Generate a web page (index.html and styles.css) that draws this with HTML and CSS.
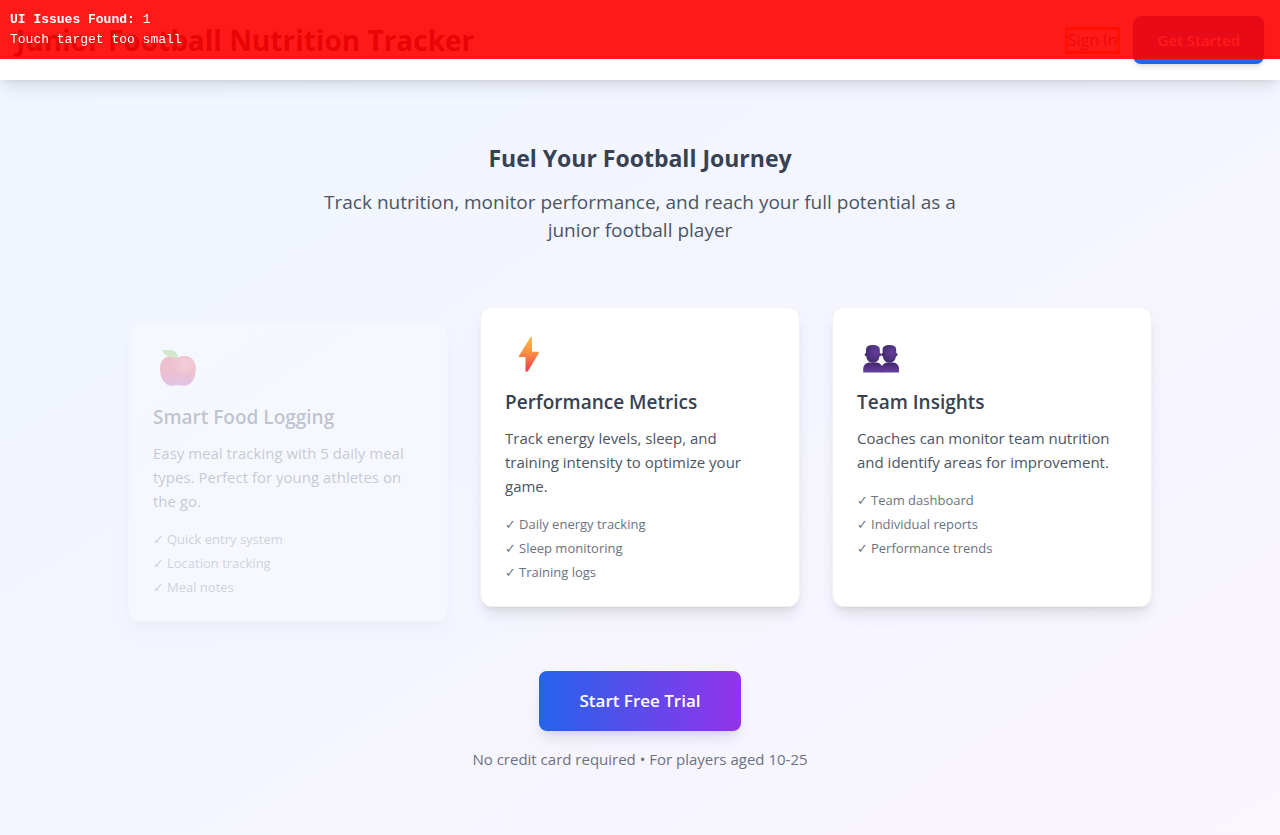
FILE: index.html
```html
<!DOCTYPE html>
<html lang="en">
<head>
<meta charset="utf-8">
<meta name="viewport" content="width=device-width, initial-scale=1">
<title>Junior Football Nutrition Tracker</title>
<link rel="stylesheet" href="styles.css">
</head>
<body>
<div class="issues" role="status">
  <strong>UI Issues Found: <span class="issue-count">1</span></strong>
  <span>Touch target too small</span>
</div>
<header class="site-header">
  <h1 class="brand">Junior Football Nutrition Tracker</h1>
  <nav class="actions">
    <a class="sign-in" href="#signin">Sign In</a>
    <button class="get-started" type="button">Get Started</button>
  </nav>
</header>
<main class="main">
  <section class="hero">
    <h2>Fuel Your Football Journey</h2>
    <p>Track nutrition, monitor performance, and reach your full potential as a junior football player</p>
  </section>
  <section class="cards">
    <article class="card entering">
      <svg class="icon" viewBox="0 -1 48 40" aria-hidden="true">
        <defs>
          <linearGradient id="apple" x1="0" y1="0" x2="0" y2="1"><stop offset="0" stop-color="#e8374f"/><stop offset=".55" stop-color="#dc2f55"/><stop offset="1" stop-color="#b044a8"/></linearGradient>
          <radialGradient id="shine" cx=".7" cy=".3" r=".4"><stop offset="0" stop-color="#ff7a80" stop-opacity=".8"/><stop offset="1" stop-color="#ff7a80" stop-opacity="0"/></radialGradient>
        </defs>
        <path fill="url(#apple)" d="M25 9.500C27 8.300 29 8 31.500 8C38.500 8 42.800 13 42.800 20.500C42.800 31 38 37.800 31 37.800C29 37.800 27.500 37.200 25 37.200C22.500 37.200 21 37.800 19 37.800C12 37.800 7 31 7 20.500C7 13 11.500 8 18.500 8C21 8 23 8.300 25 9.500Z"/>
        <path fill="url(#shine)" d="M25 9.500C27 8.300 29 8 31.500 8C38.500 8 42.800 13 42.800 20.500C42.800 31 38 37.800 31 37.800C29 37.800 27.500 37.200 25 37.200C22.500 37.200 21 37.800 19 37.800C12 37.800 7 31 7 20.500C7 13 11.500 8 18.500 8C21 8 23 8.300 25 9.500Z"/>
        <path fill="#7fc44a" d="M9.700 2H17C22 2 25 5.500 25 10C20 10 17.500 9.500 14.500 8C11.500 6.500 9.700 4.500 9.700 2Z"/>
      </svg>
      <h3>Smart Food Logging</h3>
      <p>Easy meal tracking with 5 daily meal types. Perfect for young athletes on the go.</p>
      <ul>
        <li><span class="tick">✓</span>Quick entry system</li>
        <li><span class="tick">✓</span>Location tracking</li>
        <li><span class="tick">✓</span>Meal notes</li>
      </ul>
    </article>
    <article class="card">
      <svg class="icon" viewBox="0 -1 48 40" aria-hidden="true">
        <defs><linearGradient id="bolt" x1="0" y1="0" x2="0" y2="1"><stop offset="0" stop-color="#ffb84d"/><stop offset=".45" stop-color="#fb9042"/><stop offset="1" stop-color="#f5374f"/></linearGradient></defs>
        <path fill="url(#bolt)" d="M25.400 4.200Q26 3.300 27 4V17.800Q27 18.800 28 18.800H33.500Q34.300 19 33.900 20L23 38Q21.900 39.300 20.500 38.500V25.200Q20.500 24 19.500 24H14.500Q13.600 23.700 14 22.800Z"/>
      </svg>
      <h3>Performance Metrics</h3>
      <p>Track energy levels, sleep, and training intensity to optimize your game.</p>
      <ul>
        <li><span class="tick">✓</span>Daily energy tracking</li>
        <li><span class="tick">✓</span>Sleep monitoring</li>
        <li><span class="tick">✓</span>Training logs</li>
      </ul>
    </article>
    <article class="card">
      <svg class="icon" viewBox="0 -1 48 40" aria-hidden="true">
        <defs>
          <radialGradient id="head" cx=".65" cy=".4" r=".6"><stop offset="0" stop-color="#643f9d"/><stop offset="1" stop-color="#432b6e"/></radialGradient>
          <linearGradient id="torso" x1="0" y1="0" x2="0" y2="1"><stop offset="0" stop-color="#43266e"/><stop offset="1" stop-color="#6941a0"/></linearGradient>
        </defs>
        <path fill="url(#torso)" d="M24.500 39.500V36Q24.500 30.500 30 29.500H36.500Q42 30.500 42 36V39.500Z"/>
        <path fill="url(#torso)" d="M6.200 39.500V36Q6.200 30.500 12 29.500H20Q25.500 30.500 25.500 36V39.500Z"/>
        <g fill="url(#head)">
          <path d="M9 18V16.500Q9 12 15.800 12Q22.800 12 22.800 16.500V20Q24.300 20 24.200 21.700Q24 23.300 22.500 23.300Q21.800 29.700 15.900 29.700Q10 29.700 9.300 23.300Q7.800 23.300 7.700 21.700Q7.700 20 9 20Z"/>
          <path d="M25.600 18V16.500Q25.600 12 32.400 12Q39.200 12 39.200 16.500V20Q40.700 20 40.600 21.700Q40.500 23.300 39 23.300Q38.200 29.700 32.400 29.700Q26.500 29.700 25.900 23.300Q24.300 23.300 24.200 21.700Q24.200 20 25.600 20Z"/>
        </g>
      </svg>
      <h3>Team Insights</h3>
      <p>Coaches can monitor team nutrition and identify areas for improvement.</p>
      <ul>
        <li><span class="tick">✓</span>Team dashboard</li>
        <li><span class="tick">✓</span>Individual reports</li>
        <li><span class="tick">✓</span>Performance trends</li>
      </ul>
    </article>
  </section>
  <section class="cta">
    <button class="trial" type="button">Start Free Trial</button>
    <p>No credit card required • For players aged 10-25</p>
  </section>
</main>
</body>
</html>
```

FILE: styles.css
```css
* {
  box-sizing: border-box;
  margin: 0;
}

body {
  min-height: 100vh;
  font-family: "Open Sans", "Noto Sans", sans-serif;
  font-size: 15px;
  line-height: 24px;
  color: #4b5563;
  background: linear-gradient(to bottom right, #eff6ff, #faf5ff);
}

button {
  border: 0;
  font-family: inherit;
  font-weight: 600;
  color: #fff;
  border-radius: 8px;
  cursor: pointer;
}

.issues {
  position: fixed;
  inset: 0 0 auto;
  z-index: 10;
  display: flex;
  flex-direction: column;
  padding: 10px 10px 9px;
  font-family: "Courier New", "Liberation Mono", monospace;
  font-size: 13px;
  line-height: 20px;
  color: #fff;
  background: rgba(255, 0, 0, 0.9);
}

.issue-count {
  font-weight: 400;
}

.site-header {
  display: flex;
  align-items: center;
  justify-content: space-between;
  padding: 16px;
  background: #fff;
  box-shadow: 0 10px 15px -3px rgba(0, 0, 0, 0.1), 0 4px 6px -4px rgba(0, 0, 0, 0.1);
}

.brand {
  font-size: 28px;
  line-height: 36px;
  font-weight: 700;
  color: #1f2937;
}

.actions {
  display: flex;
  align-items: center;
  gap: 16px;
}

.sign-in {
  font-size: 16px;
  line-height: 21px;
  font-weight: 500;
  color: #4b5563;
  text-decoration: none;
  outline: 3px solid orange;
}

.get-started {
  padding: 12px 24px;
  font-size: 15px;
  line-height: 24px;
  background: #2563eb;
  box-shadow: 0 4px 6px -1px rgba(0, 0, 0, 0.1), 0 2px 4px -2px rgba(0, 0, 0, 0.1);
}

.main {
  max-width: 1056px;
  margin: 0 auto;
  padding: 62px 16px;
}

.hero {
  max-width: 672px;
  margin: 0 auto 63px;
  text-align: center;
}

.hero h2 {
  margin-bottom: 14px;
  font-size: 23px;
  line-height: 32px;
  font-weight: 700;
  color: #374151;
}

.hero p {
  font-size: 19px;
  line-height: 28px;
}

.cards {
  display: grid;
  grid-template-columns: repeat(3, 1fr);
  gap: 32px;
}

.card {
  padding: 24px;
  border: 1px solid #f3f4f6;
  border-radius: 12px;
  background: #fff;
  box-shadow: 0 10px 15px -3px rgba(0, 0, 0, 0.1), 0 4px 6px -4px rgba(0, 0, 0, 0.1);
}

.entering {
  opacity: 0.27;
  transform: translateY(15px);
}

.icon {
  display: block;
  width: 48px;
  height: 40px;
  margin-bottom: 16px;
  overflow: visible;
}

.card h3 {
  margin-bottom: 10px;
  font-size: 19px;
  line-height: 28px;
  font-weight: 600;
  color: #374151;
}

.card p {
  margin-bottom: 16px;
  padding-right: 12px;
}

.card ul {
  display: grid;
  gap: 4px;
  padding: 0;
  list-style: none;
  font-size: 13px;
  line-height: 20px;
  color: #6b7280;
}

.tick {
  display: inline-block;
  width: 14px;
}

.cta {
  margin-top: 64px;
  text-align: center;
}

.trial {
  padding: 16px 40px;
  font-size: 17px;
  line-height: 28px;
  background: linear-gradient(to right, #2563eb, #9333ea);
  box-shadow: 0 10px 15px -3px rgba(0, 0, 0, 0.1), 0 4px 6px -4px rgba(0, 0, 0, 0.1);
}

.cta p {
  margin-top: 16px;
  color: #6b7280;
}

@media (max-width: 800px) {
  .cards {
    grid-template-columns: 1fr;
  }
}
```
